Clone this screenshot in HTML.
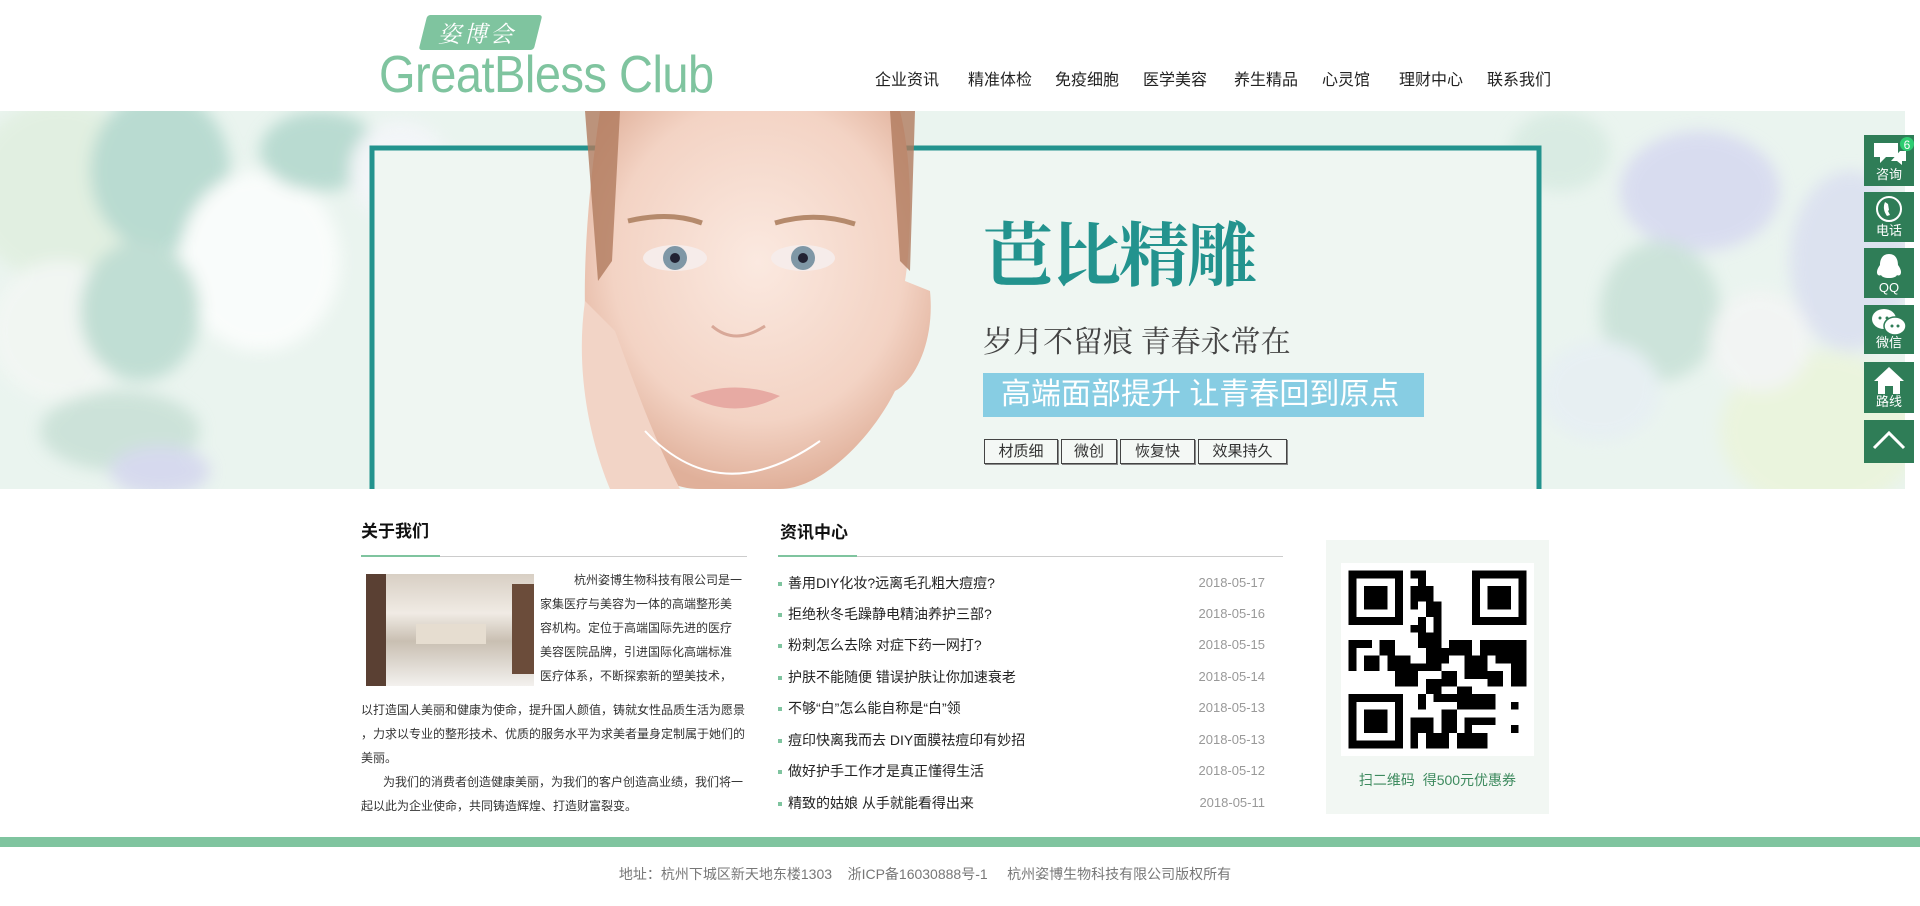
<!DOCTYPE html>
<html><head><meta charset="utf-8"><style>
*{margin:0;padding:0;box-sizing:border-box}
body{width:1920px;height:906px;overflow:hidden;background:#fff;font-family:"Liberation Sans","Noto Sans CJK SC",sans-serif;position:relative;color:#333}
.abs{position:absolute}
.nav span{position:absolute;top:66px;font-size:16px;color:#222;white-space:nowrap}
.banner{position:absolute;left:0;top:111px;width:1905px;height:378px;background:#eaf4ef;overflow:hidden}
.side div{position:absolute;left:1864px;width:50px;background:#2f7d57;color:#fff;font-size:13px;text-align:center}
.side div b{position:absolute;left:0;right:0;bottom:3px;font-weight:normal}
.tag{position:absolute;top:439px;height:25px;border:1px solid #444;box-shadow:1px 1px 0 #888;background:#f4f8f5;font-size:15px;line-height:23px;text-align:center;color:#333}
.h2{position:absolute;font-size:17px;font-weight:bold;color:#111}
.about{position:absolute;font-size:12px;color:#333;white-space:nowrap;line-height:24px}
.news div{position:absolute;left:778px;width:487px;height:20px;font-size:14px;line-height:20px;color:#222}
.news div:before{content:"";position:absolute;left:0;top:9px;width:4px;height:4px;background:#7fc49f}
.news div span.t{position:absolute;left:10px;top:0}
.news div span.d{position:absolute;right:0;top:0;color:#999;font-size:13px}
</style></head><body>
<!-- logo -->
<div class="abs" style="left:423px;top:15px;width:115px;height:35px;background:#7fc49f;transform:skewX(-14deg);border-radius:3px"></div>
<div class="abs" style="left:438px;top:16px;font-size:23px;color:#fff;letter-spacing:3px;font-style:italic;font-family:'Noto Serif CJK SC',serif">姿博会</div>
<div class="abs" style="left:379px;top:46px;font-size:47px;color:#7fc49f;line-height:52px;letter-spacing:-0.5px;transform:scaleY(1.1);transform-origin:top left;white-space:nowrap">GreatBless Club</div>
<div class="nav">
<span style="left:875px">企业资讯</span><span style="left:968px">精准体检</span><span style="left:1055px">免疫细胞</span><span style="left:1143px">医学美容</span><span style="left:1234px">养生精品</span><span style="left:1322px">心灵馆</span><span style="left:1399px">理财中心</span><span style="left:1487px">联系我们</span>
</div>
<!-- banner -->
<div class="banner">
<svg width="1905" height="378" style="position:absolute;left:0;top:0">
<defs><filter id="bl"><feGaussianBlur stdDeviation="8"/></filter>
<radialGradient id="sk" cx="50%" cy="40%" r="60%"><stop offset="0" stop-color="#fbe9e0"/><stop offset=".7" stop-color="#f3d3c4"/><stop offset="1" stop-color="#e0b09a"/></radialGradient></defs>
<g filter="url(#bl)" opacity=".75">
<ellipse cx="60" cy="80" rx="90" ry="90" fill="#dfeedd"/>
<ellipse cx="160" cy="60" rx="70" ry="80" fill="#a9d3c7"/>
<ellipse cx="260" cy="150" rx="80" ry="90" fill="#ffffff"/>
<ellipse cx="60" cy="220" rx="70" ry="70" fill="#f4f7f4"/>
<ellipse cx="140" cy="200" rx="60" ry="70" fill="#b3d7cb"/>
<ellipse cx="120" cy="320" rx="80" ry="40" fill="#c3ddd2"/>
<ellipse cx="320" cy="40" rx="60" ry="40" fill="#a9d3c7"/>
<ellipse cx="400" cy="60" rx="50" ry="50" fill="#f6f6fb"/>
<ellipse cx="160" cy="360" rx="50" ry="25" fill="#d0d1ee"/>
<ellipse cx="430" cy="130" rx="40" ry="55" fill="#e0e2f1"/>
<ellipse cx="1700" cy="80" rx="80" ry="60" fill="#d3d4f0"/>
<ellipse cx="1660" cy="200" rx="60" ry="70" fill="#c2ded3"/>
<ellipse cx="1600" cy="280" rx="60" ry="50" fill="#e6eef4"/>
<ellipse cx="1820" cy="320" rx="100" ry="80" fill="#ebf4d8"/>
<ellipse cx="1850" cy="150" rx="60" ry="90" fill="#d8dcf0"/>
<ellipse cx="1760" cy="230" rx="50" ry="50" fill="#f5f5f5"/>
<ellipse cx="1560" cy="40" rx="50" ry="40" fill="#d4e9df"/>
</g>
<rect x="372" y="37" width="1167" height="345" fill="#eff6f2"/>
<rect x="372" y="37" width="1167" height="345" fill="none" stroke="#23938e" stroke-width="5"/>
<!-- face -->
<path d="M600 0 L900 0 C915 60 910 140 905 170 L930 180 C935 230 915 270 895 280 C870 330 820 378 780 378 L700 378 C650 378 610 330 590 260 C580 200 585 100 600 0Z" fill="url(#sk)"/>
<path d="M585 0 L620 0 L612 150 L598 170 Z M890 0 L915 0 L910 160 L900 150 Z" fill="#b07a5e" opacity=".8"/>
<path d="M585 190 C575 260 590 330 610 378 L680 378 C650 320 630 260 615 220 Z" fill="#f2d4c6"/>
<path d="M628 110 Q670 100 702 112" stroke="#b58a6c" stroke-width="5" fill="none"/>
<path d="M775 112 Q815 100 855 113" stroke="#b58a6c" stroke-width="5" fill="none"/>
<ellipse cx="675" cy="147" rx="32" ry="13" fill="#f6ecea"/><circle cx="675" cy="147" r="12" fill="#7f97a6"/><circle cx="675" cy="147" r="5" fill="#223"/>
<ellipse cx="803" cy="147" rx="32" ry="13" fill="#f6ecea"/><circle cx="803" cy="147" r="12" fill="#7f97a6"/><circle cx="803" cy="147" r="5" fill="#223"/>
<path d="M712 215 Q735 235 765 215" stroke="#d8a898" stroke-width="3" fill="none"/>
<path d="M690 285 Q735 268 780 285 Q735 310 690 285Z" fill="#e7aaa3"/>
<path d="M645 320 Q720 400 820 330" stroke="#fff" stroke-width="2" fill="none"/>
</svg>
<div class="abs" style="left:983px;top:98px;font-size:70px;font-weight:bold;color:#23938e;font-family:'Noto Serif CJK SC',serif;line-height:84px;letter-spacing:-2px">芭比精雕</div>
<div class="abs" style="left:983px;top:208px;font-size:30px;color:#444;font-family:'Noto Serif CJK SC',serif;line-height:40px">岁月不留痕 青春永常在</div>
<div class="abs" style="left:983px;top:262px;width:441px;height:44px;background:#87cde3;color:#fff;font-size:30px;line-height:44px;padding-left:18px;white-space:nowrap">高端面部提升 让青春回到原点</div>
</div>
<div class="tag" style="left:984px;width:74px">材质细</div>
<div class="tag" style="left:1061px;width:56px">微创</div>
<div class="tag" style="left:1120px;width:75px">恢复快</div>
<div class="tag" style="left:1198px;width:89px">效果持久</div>
<!-- side -->
<div class="side">
<div style="top:135px;height:51px"><svg width="50" height="32" style="position:absolute;left:0;top:2px"><path d="M10 6h24v14H22l-6 6v-6h-6z" fill="#fff"/><path d="M36 14h6v10h-4v4l-5-4h-6" fill="#fff"/><circle cx="43" cy="7" r="7" fill="#2ecc71"/><text x="43" y="12" font-size="12" fill="#fff" text-anchor="middle" font-family="Liberation Sans">6</text></svg><b>咨询</b></div>
<div style="top:192px;height:50px"><svg width="50" height="32" style="position:absolute;left:0;top:2px"><circle cx="25" cy="15" r="12" fill="none" stroke="#fff" stroke-width="2"/><path d="M21 8q-3 7 2 14l3-1-2-4 1-1-1-6z" fill="#fff"/></svg><b>电话</b></div>
<div style="top:248px;height:50px"><svg width="50" height="32" style="position:absolute;left:0;top:2px"><path d="M25 4c-7 0-9 6-9 11-3 4-4 8-2 10 2 1 3 0 3 0 1 2 4 3 8 3s7-1 8-3c0 0 1 1 3 0 2-2 1-6-2-10 0-5-2-11-9-11z" fill="#fff"/></svg><b style="font-family:'Liberation Sans'">QQ</b></div>
<div style="top:305px;height:49px"><svg width="50" height="32" style="position:absolute;left:0;top:2px"><ellipse cx="20" cy="12" rx="12" ry="10" fill="#fff"/><ellipse cx="31" cy="19" rx="11" ry="9" fill="#fff" stroke="#2f7d57" stroke-width="1.5"/><circle cx="16" cy="11" r="1.5" fill="#2f7d57"/><circle cx="23" cy="11" r="1.5" fill="#2f7d57"/><circle cx="28" cy="19" r="1.5" fill="#2f7d57"/><circle cx="34" cy="19" r="1.5" fill="#2f7d57"/></svg><b>微信</b></div>
<div style="top:362px;height:51px"><svg width="50" height="32" style="position:absolute;left:0;top:2px"><path d="M25 3L10 17h4v13h7v-8h8v8h7V17h4z" fill="#fff"/></svg><b>路线</b></div>
<div style="top:420px;height:43px"><svg width="50" height="43"><path d="M10 28L25 13 40 28" stroke="#fff" stroke-width="3" fill="none"/></svg></div>
</div>
<!-- about -->
<div class="h2" style="left:361px;top:517px">关于我们</div>
<div class="abs" style="left:361px;top:556px;width:386px;height:1px;background:#ccc"></div>
<div class="abs" style="left:361px;top:555px;width:79px;height:2px;background:#7fc49f"></div>
<div class="abs" style="left:366px;top:574px;width:168px;height:112px;background:linear-gradient(180deg,#d8cfc4 0%,#f0ebe4 35%,#c9bfb2 60%,#f3f1ee 100%)">
<div style="position:absolute;left:0;top:0;width:20px;height:112px;background:#5a4033"></div><div style="position:absolute;right:0;top:10px;width:22px;height:90px;background:#6b4c3a"></div><div style="position:absolute;left:50px;top:50px;width:70px;height:20px;background:#e6ddd0"></div></div>
<div class="about" style="left:540px;top:568px">
<span style="padding-left:34px">杭州姿博生物科技有限公司是一</span><br>家集医疗与美容为一体的高端整形美<br>容机构。定位于高端国际先进的医疗<br>美容医院品牌，引进国际化高端标准<br>医疗体系，不断探索新的塑美技术，</div>
<div class="about" style="left:361px;top:698px">以打造国人美丽和健康为使命，提升国人颜值，铸就女性品质生活为愿景<br>，力求以专业的整形技术、优质的服务水平为求美者量身定制属于她们的<br>美丽。<br><span style="padding-left:22px">为我们的消费者创造健康美丽，为我们的客户创造高业绩，我们将一</span><br>起以此为企业使命，共同铸造辉煌、打造财富裂变。</div>
<!-- news -->
<div class="h2" style="left:780px;top:518px">资讯中心</div>
<div class="abs" style="left:778px;top:556px;width:505px;height:1px;background:#ccc"></div>
<div class="abs" style="left:778px;top:555px;width:79px;height:2px;background:#7fc49f"></div>
<div class="news">
<div style="top:573px"><span class="t">善用DIY化妆?远离毛孔粗大痘痘?</span><span class="d">2018-05-17</span></div>
<div style="top:604px"><span class="t">拒绝秋冬毛躁静电精油养护三部?</span><span class="d">2018-05-16</span></div>
<div style="top:635px"><span class="t">粉刺怎么去除 对症下药一网打?</span><span class="d">2018-05-15</span></div>
<div style="top:667px"><span class="t">护肤不能随便 错误护肤让你加速衰老</span><span class="d">2018-05-14</span></div>
<div style="top:698px"><span class="t">不够“白”怎么能自称是“白”领</span><span class="d">2018-05-13</span></div>
<div style="top:730px"><span class="t">痘印快离我而去 DIY面膜祛痘印有妙招</span><span class="d">2018-05-13</span></div>
<div style="top:761px"><span class="t">做好护手工作才是真正懂得生活</span><span class="d">2018-05-12</span></div>
<div style="top:793px"><span class="t">精致的姑娘 从手就能看得出来</span><span class="d">2018-05-11</span></div>
</div>
<!-- QR -->
<div class="abs" style="left:1326px;top:540px;width:223px;height:274px;background:#f2f7f3"></div>
<svg class="abs" style="left:1341px;top:562px" width="193" height="195" viewBox="0 0 25 25" shape-rendering="crispEdges">
<rect width="25" height="25" fill="#fff"/>
<g fill="#000">
<path d="M1 1h7v7H1zM2 2v5h5V2z" fill-rule="evenodd"/><rect x="3" y="3" width="3" height="3"/>
<path d="M17 1h7v7h-7zM18 2v5h5V2z" fill-rule="evenodd"/><rect x="19" y="3" width="3" height="3"/>
<path d="M1 17h7v7H1zM2 18v5h5v-5z" fill-rule="evenodd"/><rect x="3" y="19" width="3" height="3"/>
<rect x="9" y="1" width="2" height="1"/><rect x="10" y="2" width="1" height="2"/><rect x="9" y="3" width="3" height="2"/><rect x="11" y="5" width="2" height="2"/><rect x="9" y="5" width="1" height="1"/><rect x="10" y="7" width="1" height="2"/><rect x="9" y="8" width="1" height="1"/><rect x="12" y="7" width="1" height="2"/>
<rect x="1" y="10" width="3" height="1"/><rect x="1" y="11" width="1" height="3"/><rect x="3" y="12" width="2" height="2"/><rect x="5" y="10" width="2" height="2"/><rect x="6" y="12" width="3" height="2"/><rect x="10" y="9" width="3" height="2"/><rect x="11" y="11" width="3" height="2"/><rect x="9" y="13" width="4" height="1"/><rect x="14" y="10" width="3" height="2"/><rect x="16" y="12" width="3" height="3"/><rect x="18" y="10" width="2" height="2"/><rect x="20" y="10" width="4" height="3"/><rect x="22" y="13" width="2" height="3"/><rect x="19" y="14" width="2" height="2"/>
<rect x="7" y="14" width="3" height="2"/><rect x="11" y="15" width="2" height="2"/><rect x="13" y="14" width="2" height="2"/><rect x="10" y="17" width="1" height="2"/><rect x="12" y="17" width="3" height="1"/><rect x="15" y="16" width="2" height="3"/><rect x="17" y="17" width="3" height="2"/><rect x="22" y="18" width="1" height="1"/>
<rect x="9" y="20" width="3" height="2"/><rect x="9" y="22" width="1" height="2"/><rect x="13" y="19" width="2" height="3"/><rect x="11" y="22" width="3" height="2"/><rect x="15" y="22" width="4" height="2"/><rect x="17" y="20" width="3" height="1"/><rect x="22" y="21" width="1" height="1"/><rect x="16" y="20" width="1" height="2"/>
</g></svg>
<div class="abs" style="left:1326px;top:770px;width:223px;text-align:center;font-size:14px;color:#3d8a5e;white-space:pre">扫二维码  得500元优惠券</div>
<!-- footer -->
<div class="abs" style="left:0;top:837px;width:1920px;height:10px;background:#7fc49f"></div>
<div class="abs" style="left:0;top:864px;width:1850px;text-align:center;font-size:14px;color:#777;white-space:pre">地址：杭州下城区新天地东楼1303    浙ICP备16030888号-1     杭州姿博生物科技有限公司版权所有</div>
</body></html>
